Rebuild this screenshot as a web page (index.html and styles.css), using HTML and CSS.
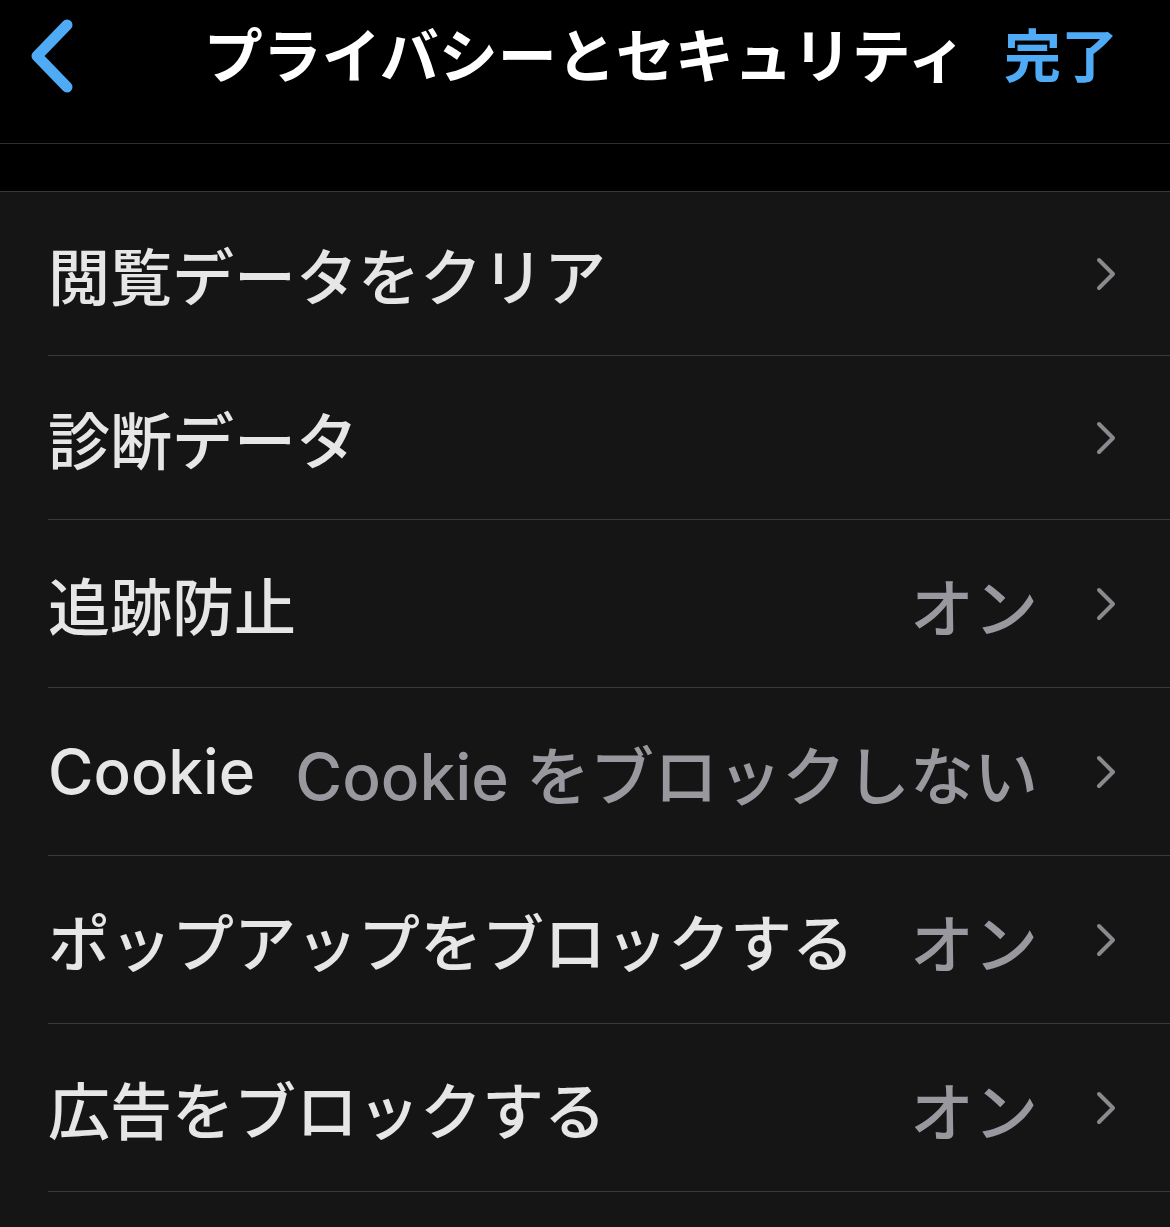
FILE: index.html
```html
<!DOCTYPE html>
<html lang="ja">
<head>
    <meta charset="UTF-8">
    <meta name="viewport" content="width=device-width, initial-scale=1.0">
    <title>プライバシーとセキュリティ</title>
    <link rel="stylesheet" href="styles.css">
</head>
<body>
    <header class="nav">
        <div class="nav-bar">
            <a class="back" href="#" aria-label="戻る">
                <svg width="46" height="76" viewBox="0 0 46 76">
                    <path d="M38 7 L8 38 L38 69" fill="none" stroke="#4fabf5" stroke-width="11" stroke-linecap="round" stroke-linejoin="round"/>
                </svg>
            </a>
            <h1 class="title">プライバシーとセキュリティ</h1>
            <a class="done" href="#">完了</a>
        </div>
    </header>

    <div class="gap"></div>

    <ul class="list">
        <li class="row short">
            <span class="label">閲覧データをクリア</span>
            <span class="chevron"><svg width="20" height="34" viewBox="0 0 20 34"><path d="M3 3 L17 17 L3 31" fill="none" stroke="#8a8a8e" stroke-width="4" stroke-linecap="round" stroke-linejoin="round"/></svg></span>
        </li>
        <li class="row short">
            <span class="label">診断データ</span>
            <span class="chevron"><svg width="20" height="34" viewBox="0 0 20 34"><path d="M3 3 L17 17 L3 31" fill="none" stroke="#8a8a8e" stroke-width="4" stroke-linecap="round" stroke-linejoin="round"/></svg></span>
        </li>
        <li class="row">
            <span class="label">追跡防止</span>
            <span class="value">オン</span>
            <span class="chevron"><svg width="20" height="34" viewBox="0 0 20 34"><path d="M3 3 L17 17 L3 31" fill="none" stroke="#8a8a8e" stroke-width="4" stroke-linecap="round" stroke-linejoin="round"/></svg></span>
        </li>
        <li class="row">
            <span class="label">Cookie</span>
            <span class="value">Cookie をブロックしない</span>
            <span class="chevron"><svg width="20" height="34" viewBox="0 0 20 34"><path d="M3 3 L17 17 L3 31" fill="none" stroke="#8a8a8e" stroke-width="4" stroke-linecap="round" stroke-linejoin="round"/></svg></span>
        </li>
        <li class="row">
            <span class="label">ポップアップをブロックする</span>
            <span class="value">オン</span>
            <span class="chevron"><svg width="20" height="34" viewBox="0 0 20 34"><path d="M3 3 L17 17 L3 31" fill="none" stroke="#8a8a8e" stroke-width="4" stroke-linecap="round" stroke-linejoin="round"/></svg></span>
        </li>
        <li class="row">
            <span class="label">広告をブロックする</span>
            <span class="value">オン</span>
            <span class="chevron"><svg width="20" height="34" viewBox="0 0 20 34"><path d="M3 3 L17 17 L3 31" fill="none" stroke="#8a8a8e" stroke-width="4" stroke-linecap="round" stroke-linejoin="round"/></svg></span>
        </li>
    </ul>
</body>
</html>
```

FILE: styles.css
```css
body {
    margin: 0;
    background-color: #151515;
    font-family: Inter, "Noto Sans CJK JP", sans-serif;
    color: #e6e6e6;
}
.nav {
    height: 144px;
    background-color: #000;
    border-bottom: 1px solid #2e2e30;
    box-sizing: border-box;
}
.nav-bar {
    height: 112px;
    display: grid;
    grid-template-columns: 1fr auto 1fr;
    align-items: center;
    padding: 0 52px;
}
.back {
    display: flex;
    align-items: center;
    margin-left: -23px;
}
.title {
    margin: 0;
    font-size: 59px;
    font-weight: 700;
    color: #fff;
    line-height: 1;
}
.done {
    justify-self: end;
    font-size: 57px;
    font-weight: 700;
    color: #4fabf5;
    text-decoration: none;
    line-height: 1;
}
.gap {
    height: 47px;
    background-color: #000;
}
.list {
    list-style: none;
    margin: 0;
    padding: 0;
    background-color: #151515;
    border-top: 1px solid #38383a;
}
.row {
    display: flex;
    align-items: center;
    height: 168px;
    margin-left: 48px;
    padding-right: 54px;
    border-bottom: 1px solid #38383a;
    box-sizing: border-box;
    font-size: 62px;
    font-weight: 500;
}
.row.short {
    height: 164px;
}
.label {
    white-space: nowrap;
}
.value {
    margin-left: auto;
    font-size: 64px;
    color: #98989e;
    white-space: nowrap;
}
.chevron {
    display: flex;
    margin-left: auto;
}
.value + .chevron {
    margin-left: 58px;
}
```
